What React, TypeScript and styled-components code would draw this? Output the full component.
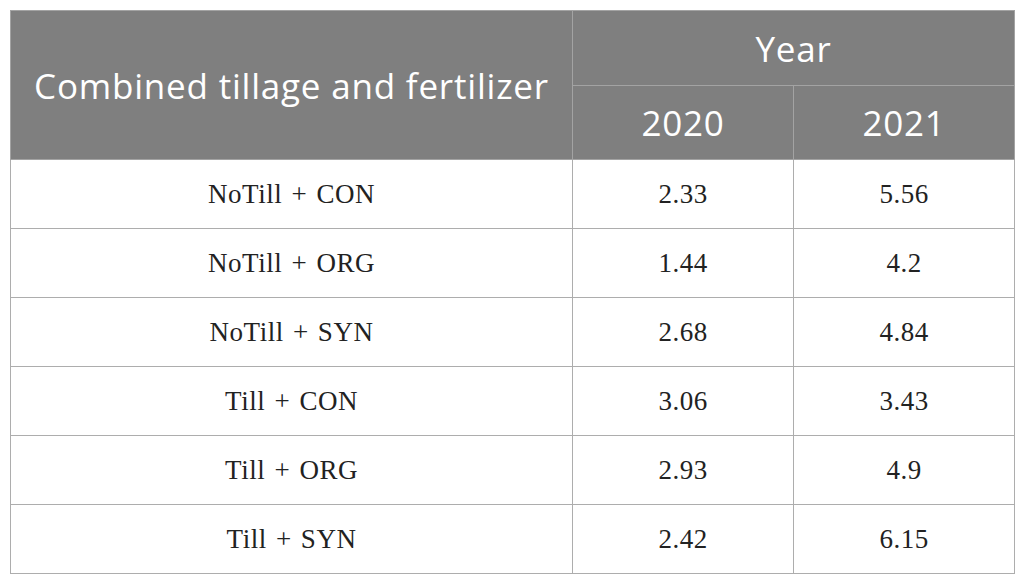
import styled, { createGlobalStyle } from "styled-components";

interface Row {
    label: string;
    y2020: string;
    y2021: string;
}

const rows: Row[] = [
    { label: "NoTill + CON", y2020: "2.33", y2021: "5.56" },
    { label: "NoTill + ORG", y2020: "1.44", y2021: "4.2" },
    { label: "NoTill + SYN", y2020: "2.68", y2021: "4.84" },
    { label: "Till + CON", y2020: "3.06", y2021: "3.43" },
    { label: "Till + ORG", y2020: "2.93", y2021: "4.9" },
    { label: "Till + SYN", y2020: "2.42", y2021: "6.15" },
];

function App() {
    return (
        <>
            <GlobalStyle />
            <Page>
                <Table>
                    <colgroup>
                        <col style={{ width: 562 }} />
                        <col style={{ width: 221 }} />
                        <col style={{ width: 221 }} />
                    </colgroup>
                    <thead>
                        <HeadRow $height={75}>
                            <HeadCell rowSpan={2}>Combined tillage and fertilizer</HeadCell>
                            <HeadCell colSpan={2}>Year</HeadCell>
                        </HeadRow>
                        <HeadRow $height={74}>
                            <HeadCell>2020</HeadCell>
                            <HeadCell>2021</HeadCell>
                        </HeadRow>
                    </thead>
                    <tbody>
                        {rows.map((r) => (
                            <BodyRow key={r.label}>
                                <Cell>{r.label}</Cell>
                                <Cell>{r.y2020}</Cell>
                                <Cell>{r.y2021}</Cell>
                            </BodyRow>
                        ))}
                    </tbody>
                </Table>
            </Page>
        </>
    );
}

const GlobalStyle = createGlobalStyle`
    body {
        margin: 0;
        background: #FFFFFF;
    }
`;

const Page = styled.div`
    padding: 10px 0 0 10px;
`;

const Table = styled.table`
    border-collapse: collapse;
    table-layout: fixed;
    width: 1004px;
    border: 1px solid #ADADAD;
`;

const HeadRow = styled.tr<{ $height: number }>`
    height: ${(p) => p.$height}px;
`;

const HeadCell = styled.th`
    background: #7F7F7F;
    color: #FFFFFF;
    font-family: "Open Sans", "Liberation Sans", sans-serif;
    font-weight: 400;
    font-size: 35px;
    letter-spacing: 0.8px;
    text-align: center;
    padding: 0;
    border: 1px solid #A3A3A3;
`;

const BodyRow = styled.tr`
    height: 69px;
`;

const Cell = styled.td`
    font-family: "Liberation Serif", "Times New Roman", serif;
    font-size: 27px;
    letter-spacing: 0.5px;
    word-spacing: 2px;
    color: #222222;
    text-align: center;
    padding: 0;
    border: 1px solid #ADADAD;
`;

export default App;
